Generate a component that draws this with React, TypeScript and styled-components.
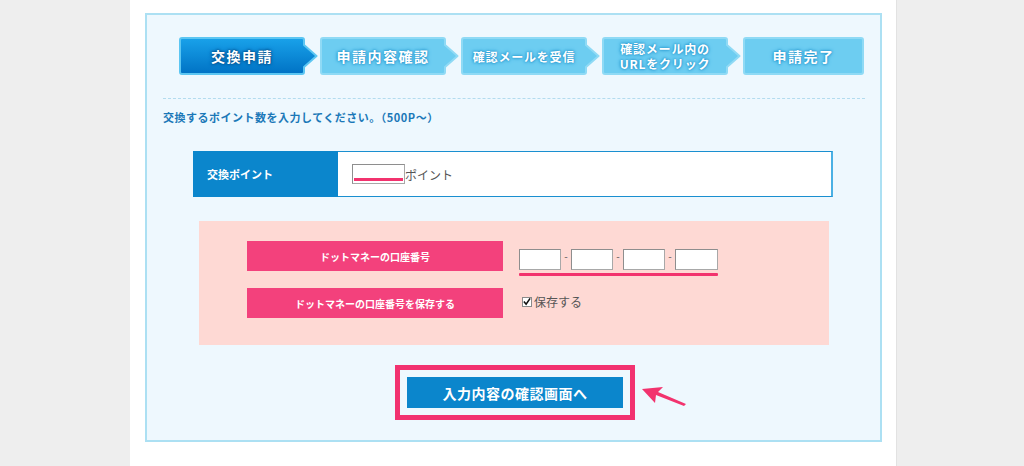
import React from "react";
import styled, { createGlobalStyle } from "styled-components";

const Global = createGlobalStyle`
  html, body { margin: 0; padding: 0; background: #eeeeee; }
  body { font-family: "Noto Sans CJK JP", "Noto Sans", sans-serif; }
`;

const Page = styled.div`
  display: flex;
  height: 466px;
  overflow: hidden;
`;

const Column = styled.div`
  margin-left: 130px;
  width: 767px;
  background: #ffffff;
  border-right: 1px solid #e2e2e2;
  padding: 13px 0 0 15px;
  box-sizing: border-box;
`;

const Panel = styled.div`
  width: 737px;
  height: 429px;
  box-sizing: border-box;
  background: #eef8fe;
  border: 2px solid #ace0f3;
  padding: 22px 15px 0 16px;
  display: flex;
  flex-direction: column;
  position: relative;
`;

const Steps = styled.div`
  display: flex;
  gap: 2px;
  margin-left: 16px;
`;

const Step = styled.div<{ $w: number }>`
  display: grid;
  width: ${(p) => p.$w}px;
  height: 38px;
  & > * { grid-area: 1 / 1; }
`;

const StepLabel = styled.div<{ $active?: boolean; $body: number; $small?: boolean }>`
  width: ${(p) => p.$body}px;
  display: flex;
  align-items: center;
  justify-content: center;
  text-align: center;
  color: #ffffff;
  font-weight: 700;
  font-size: ${(p) => (p.$small ? 12 : 14)}px;
  line-height: ${(p) => (p.$small ? 15 : 16)}px;
  letter-spacing: ${(p) => (p.$small ? 0.8 : 1.5)}px;
  text-shadow: ${(p) =>
    p.$active
      ? "0 0 2px #00508c, 0 0 3px #00508c, 0 0 4px #0a64a8"
      : "0 0 2px #2a9ad0, 0 0 3px #2a9ad0, 0 0 4px #3aa8dc"};
`;

const Separator = styled.div`
  margin-top: 23px;
  border-top: 1px dashed #b3dcef;
`;

const Lead = styled.p`
  margin: 11px 0 0 0;
  color: #1b78b8;
  font-size: 11px;
  font-weight: 700;
  line-height: 14px;
  letter-spacing: 0.5px;
`;

const PointTable = styled.div`
  margin: 27px 0 0 30px;
  width: 640px;
  height: 46px;
  display: flex;
`;

const PointLabel = styled.div`
  width: 145px;
  background: #0b86cc;
  color: #ffffff;
  font-size: 11px;
  font-weight: 700;
  display: flex;
  align-items: center;
  padding-left: 14px;
  box-sizing: border-box;
`;

const PointValue = styled.div`
  flex: 1;
  background: #ffffff;
  border: 1px solid #1a8fd0;
  border-left: none;
  border-right-width: 2px;
  border-right-color: #4ab0e4;
  display: flex;
  align-items: center;
  padding-left: 14px;
  color: #555;
  font-size: 12px;
`;

const Field = styled.div<{ $w: number; $h: number; $mark?: boolean }>`
  width: ${(p) => p.$w}px;
  height: ${(p) => p.$h}px;
  box-sizing: border-box;
  background: #ffffff;
  border: 1px solid #a8a8a8;
  border-top-color: #8e8e8e;
  border-left-color: #8e8e8e;
  display: flex;
  align-items: flex-end;
  padding: 0 1px 2px;
  &::after {
    content: "";
    display: ${(p) => (p.$mark ? "block" : "none")};
    width: 100%;
    height: 3px;
    background: #f2336e;
  }
`;

const PinkBox = styled.div`
  margin: 24px 0 0 36px;
  width: 630px;
  height: 124px;
  background: #fed9d4;
  padding: 20px 0 0 48px;
  box-sizing: border-box;
  display: flex;
  flex-direction: column;
  gap: 17px;
`;

const PinkRow = styled.div`
  display: flex;
  align-items: flex-start;
  gap: 16px;
  height: 30px;
`;

const PinkLabel = styled.div`
  width: 256px;
  height: 30px;
  flex-shrink: 0;
  background: #f3417c;
  color: #ffffff;
  font-size: 10px;
  font-weight: 700;
  display: flex;
  align-items: center;
  justify-content: center;
`;

const AccountGroup = styled.div`
  display: flex;
  flex-direction: column;
  padding-top: 8px;
`;

const AccountFields = styled.div`
  display: flex;
  align-items: flex-end;
`;

const Dash = styled.span`
  width: 10px;
  text-align: center;
  font-size: 10px;
  line-height: 14px;
  color: #555;
  align-self: flex-start;
`;

const Underline = styled.div`
  margin-top: 3px;
  width: 199px;
  height: 3px;
  background: #f2336e;
  border-radius: 1px;
`;

const CheckWrap = styled.label`
  display: flex;
  align-items: center;
  gap: 2px;
  padding-top: 5px;
  padding-left: 3px;
  color: #555;
  font-size: 12px;
`;

const Box = styled.span`
  width: 10px;
  height: 10px;
  box-sizing: border-box;
  border: 1px solid #8a8a8a;
  background: #ffffff;
  display: flex;
  align-items: center;
  justify-content: center;
`;

const ButtonArea = styled.div`
  margin-top: 20px;
  align-self: center;
  margin-left: 2px;
  position: relative;
`;

const ButtonFrame = styled.div`
  width: 240px;
  height: 55px;
  box-sizing: border-box;
  border: 5px solid #f23270;
  padding: 7px;
  display: flex;
  background: #eef8fe;
`;

const SubmitButton = styled.button`
  flex: 1;
  border: none;
  background: #0b86cc;
  color: #ffffff;
  font-family: "Noto Sans CJK JP", sans-serif;
  font-size: 14px;
  font-weight: 700;
  letter-spacing: 0.5px;
  cursor: pointer;
  padding: 0;
`;

const Pointer = styled.svg`
  position: absolute;
  left: 245px;
  top: 20px;
`;

type StepDef = { label: React.ReactNode; small?: boolean };

const steps: StepDef[] = [
  { label: "交換申請" },
  { label: "申請内容確認" },
  { label: "確認メールを受信", small: true },
  { label: <>確認メール内の<br />URLをクリック</>, small: true },
  { label: "申請完了" },
];

function StepShape({ active, arrow, w }: { active: boolean; arrow: boolean; w: number }) {
  const fill = active ? "url(#activeGrad)" : "#6dcdf1";
  const stroke = active ? "#5cc6f2" : "#8fdaf5";
  const b = arrow ? w - 14 : w - 1;
  const d = arrow
    ? `M3 1 H${b - 2} Q${b} 1 ${b} 3 V8 L${w - 1.5} 19 L${b} 30 V35 Q${b} 37 ${b - 2} 37 H3 Q1 37 1 35 V3 Q1 1 3 1 Z`
    : `M3 1 H${b - 2} Q${b} 1 ${b} 3 V35 Q${b} 37 ${b - 2} 37 H3 Q1 37 1 35 V3 Q1 1 3 1 Z`;
  return (
    <svg width={w} height={38} viewBox={`0 0 ${w} 38`}>
      <defs>
        <linearGradient id="activeGrad" x1="0" y1="0" x2="0" y2="1">
          <stop offset="0" stopColor="#19a2ea" />
          <stop offset="1" stopColor="#0072c4" />
        </linearGradient>
      </defs>
      <path d={d} fill={fill} stroke={stroke} strokeWidth={2} strokeLinejoin="round" />
    </svg>
  );
}

export default function App() {
  return (
    <Page>
      <Global />
      <Column>
        <Panel>
          <Steps>
            {steps.map((s, i) => {
              const last = i === steps.length - 1;
              const w = last ? 121 : 139;
              return (
                <Step key={i} $w={w}>
                  <StepShape active={i === 0} arrow={!last} w={w} />
                  <StepLabel $active={i === 0} $body={last ? w : w - 13} $small={s.small}>
                    {s.label}
                  </StepLabel>
                </Step>
              );
            })}
          </Steps>
          <Separator />
          <Lead>交換するポイント数を入力してください。（500P～）</Lead>
          <PointTable>
            <PointLabel>交換ポイント</PointLabel>
            <PointValue>
              <Field $w={53} $h={20} $mark />
              <span>ポイント</span>
            </PointValue>
          </PointTable>
          <PinkBox>
            <PinkRow>
              <PinkLabel>ドットマネーの口座番号</PinkLabel>
              <AccountGroup>
                <AccountFields>
                  <Field $w={42} $h={21} />
                  <Dash>-</Dash>
                  <Field $w={42} $h={21} />
                  <Dash>-</Dash>
                  <Field $w={42} $h={21} />
                  <Dash>-</Dash>
                  <Field $w={43} $h={21} />
                </AccountFields>
                <Underline />
              </AccountGroup>
            </PinkRow>
            <PinkRow>
              <PinkLabel>ドットマネーの口座番号を保存する</PinkLabel>
              <CheckWrap>
                <Box>
                  <svg width="9" height="9" viewBox="0 0 9 9">
                    <path d="M1 4.5 L3.5 7.5 L8 1" fill="none" stroke="#111" strokeWidth="1.8" />
                  </svg>
                </Box>
                保存する
              </CheckWrap>
            </PinkRow>
          </PinkBox>
          <ButtonArea>
            <ButtonFrame>
              <SubmitButton>入力内容の確認画面へ</SubmitButton>
            </ButtonFrame>
            <Pointer width="48" height="24" viewBox="0 0 48 24">
              <path d="M2 4 L23 2 L18 7 L46 19 L44 21 L16 10 L15 18 Z" fill="#f2336e" />
            </Pointer>
          </ButtonArea>
        </Panel>
      </Column>
    </Page>
  );
}
